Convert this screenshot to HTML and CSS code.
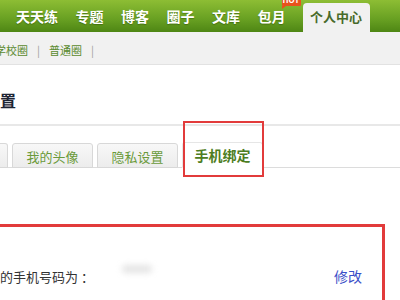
FILE: index.html
```html
<!DOCTYPE html>
<html lang="zh-CN">
<head>
<meta charset="utf-8">
<title>手机绑定</title>
<link rel="stylesheet" href="styles.css">
</head>
<body>
<div class="nav">
  <ul class="nav-list">
    <li class="nav-item">天天练</li>
    <li class="nav-item">专题</li>
    <li class="nav-item">博客</li>
    <li class="nav-item">圈子</li>
    <li class="nav-item">文库</li>
    <li class="nav-item nav-hot">包月<span class="hot">HOT</span></li>
    <li class="nav-item nav-active">个人中心</li>
  </ul>
</div>
<div class="subbar">
  <span class="sub-link sub-first">学校圈</span>
  <span class="sub-sep">|</span>
  <span class="sub-link">普通圈</span>
  <span class="sub-sep">|</span>
</div>
<div class="main">
  <h2 class="title">置</h2>
  <div class="tabs-wrap">
    <div class="tabs">
      <div class="tab tab-cut"></div>
      <div class="tab">我的头像</div>
      <div class="tab">隐私设置</div>
      <div class="tab tab-active">手机绑定</div>
    </div>
  </div>
  <div class="bind-box">
    <div class="bind-row">
      <span class="bind-label">的手机号码为 ：</span>
      <span class="bind-blur"></span>
      <span class="bind-edit">修改</span>
    </div>
  </div>
  <div class="mark-tab"></div>
</div>
</body>
</html>
```
FILE: styles.css
```css
* { box-sizing: border-box; }
html, body { margin: 0; padding: 0; }
body {
  width: 400px;
  height: 300px;
  overflow: hidden;
  background: #fff;
  font-family: "Noto Sans CJK SC", "Microsoft YaHei", sans-serif;
}
.nav {
  height: 32px;
  background: linear-gradient(#8dbd34, #68a022 60%, #4e8614);
}
.nav-list {
  list-style: none;
  margin: 0;
  padding: 0 0 0 16px;
  display: flex;
  align-items: flex-end;
  gap: 17.5px;
  height: 32px;
}
.nav-item {
  position: relative;
  height: 32px;
  line-height: 32px;
  font-size: 14px;
  font-weight: bold;
  color: #fff;
  text-shadow: 0 1px 1px rgba(40, 70, 0, 0.45);
}
.hot {
  position: absolute;
  left: 24px;
  top: -6px;
  width: 19px;
  height: 12px;
  line-height: 12px;
  background: #e8521c;
  color: #fff;
  font-size: 8px;
  text-align: center;
  text-shadow: none;
  border-radius: 1px;
}
.hot::after {
  content: "";
  position: absolute;
  left: 0;
  bottom: -3px;
  border-top: 3px solid #e8521c;
  border-right: 4px solid transparent;
}
.nav-active {
  margin-top: 3px;
  height: 29px;
  line-height: 28px;
  padding: 0 7px;
  width: 67px;
  font-size: 13px;
  background: #f1f1f1;
  color: #476a2a;
  text-shadow: none;
  border-radius: 4px 4px 0 0;
}
.subbar {
  height: 33px;
  background: #f1f1f1;
  border-bottom: 1px solid #e2e2e2;
  display: flex;
  align-items: center;
  gap: 9px;
  padding-top: 3px;
  font-size: 11px;
}
.sub-link { color: #5a8a2e; }
.sub-first { margin-left: -5px; }
.sub-sep { color: #a0a0a0; }
.main {
  position: relative;
}
.title {
  margin: 0;
  padding-top: 27px;
  height: 43px;
  line-height: 16px;
  font-size: 16px;
  font-weight: bold;
  color: #1d2433;
}
.tabs-wrap {
  margin-top: 16px;
  border-top: 2px solid #e8e8e8;
  padding-top: 17px;
}
.tabs {
  display: flex;
  align-items: flex-end;
  gap: 4px;
  height: 25px;
  border-bottom: 1px solid #dcdcdc;
}
.tab {
  width: 81px;
  height: 25px;
  margin-bottom: -1px;
  line-height: 25px;
  text-align: center;
  font-size: 13px;
  color: #6a9a3a;
  background: linear-gradient(#f8f8f8, #ececec);
  border: 1px solid #d8d8d8;
  border-radius: 3px 3px 0 0;
}
.tab-cut {
  width: 8px;
  border-left: 0;
  border-radius: 0 3px 0 0;
}
.tab-active {
  height: 26px;
  background: #fff;
  border-color: #e6e6e6;
  border-bottom-color: #fff;
  color: #4d7d22;
  font-weight: bold;
  font-size: 14px;
}
.bind-box {
  margin-top: 56px;
  margin-right: 15px;
  height: 78px;
  border: 3px solid #e23b3b;
  border-left: 0;
  border-bottom: 0;
  padding: 39px 20px 0 0;
}
.bind-row {
  display: flex;
  align-items: center;
  height: 20px;
  font-size: 13px;
  color: #333;
}
.bind-label { flex: none; }
.bind-blur {
  width: 30px;
  height: 8px;
  margin: -14px 0 0 28px;
  background: #e4e4e4;
  filter: blur(3px);
  border-radius: 4px;
}
.bind-edit {
  margin-left: auto;
  color: #3b50c8;
  font-size: 14px;
}
.mark-tab {
  position: absolute;
  left: 183px;
  top: 56px;
  width: 81px;
  height: 56px;
  border: 2px solid #e23b3b;
}
```
